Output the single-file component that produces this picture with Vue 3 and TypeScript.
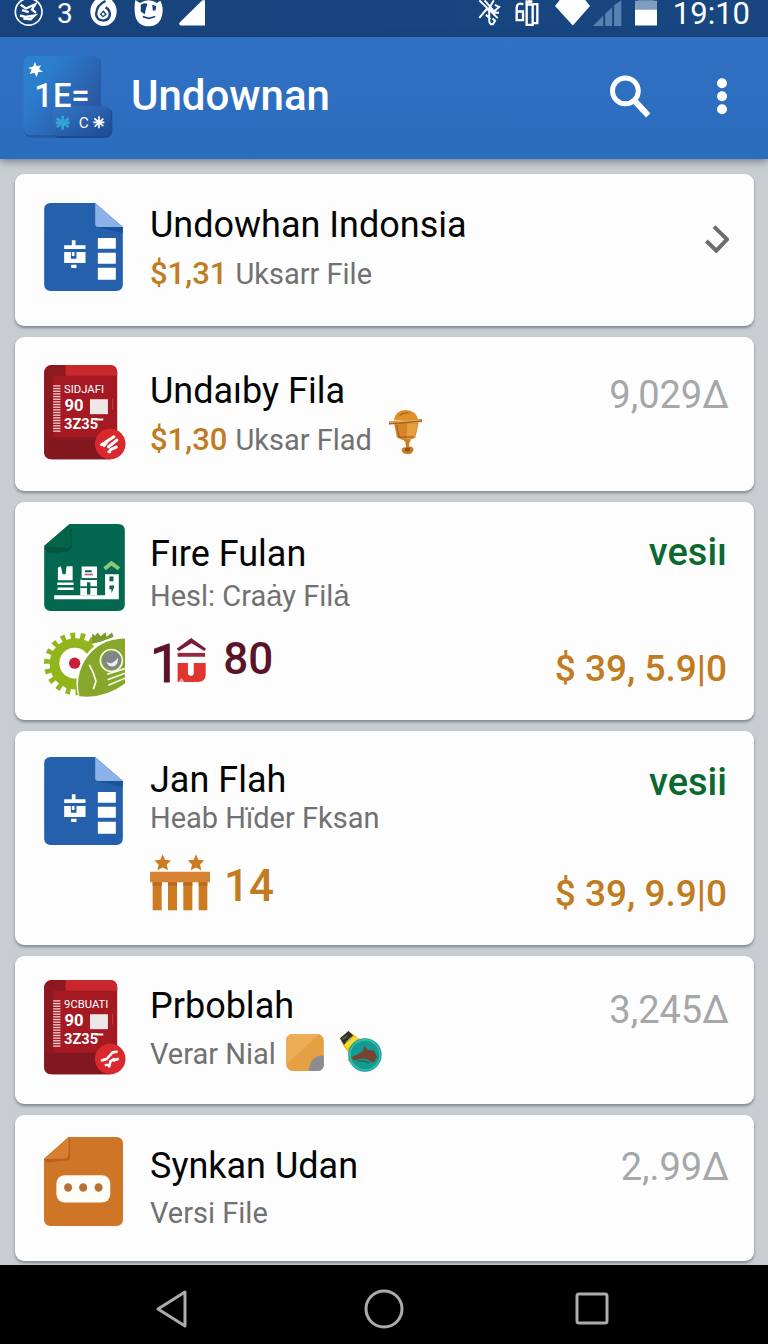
<script setup lang="ts">
interface Item {
  id: string
  icon: 'blue' | 'red' | 'green' | 'orange'
  title: string
  price?: string
  sub: string
  emblem?: 'lamp' | 'note'
  value?: string
  unit?: string
  status?: string
  total?: string
}

const items: Item[] = [
  { id: 'one', icon: 'blue', title: 'Undowhan Indonsia', price: '$1,31', sub: 'Uksarr File' },
  { id: 'two', icon: 'red', title: 'Undaıby Fila', price: '$1,30', sub: 'Uksar Flad', emblem: 'lamp', value: '9,029', unit: 'Δ' },
  { id: 'three', icon: 'green', title: 'Fıre Fulan', sub: 'Hesl: Craȧy Filȧ', status: 'vesiı', total: '$ 39, 5.9|0' },
  { id: 'four', icon: 'blue', title: 'Jan Flah', sub: 'Heab Hïder Fksan', status: 'vesii', total: '$ 39, 9.9|0' },
  { id: 'five', icon: 'red', title: 'Prboblah', sub: 'Verar Nial', emblem: 'note', value: '3,245', unit: 'Δ' },
  { id: 'six', icon: 'orange', title: 'Synkan Udan', sub: 'Versi File', value: '2,.99', unit: 'Δ' },
]

const bars = Array.from({ length: 18 }, (_, i) => 61 + i * 8)
</script>

<template>
  <div class="screen">
    <div class="status">
      <div class="status-left">
        <svg class="s1" viewBox="0 0 90 80" aria-hidden="true">
          <g fill="none" stroke="#fff">
            <circle cx="44" cy="35" r="40" stroke-width="5" />
            <path d="M20 14 36 25 64 12 54 28 66 38M24 30 44 36M18 46 34 50 62 46 50 57 28 55" stroke-width="7" />
          </g>
        </svg>
        <span class="count">3</span>
        <svg class="s2" viewBox="0 0 80 80" aria-hidden="true">
          <ellipse cx="40" cy="34" rx="39" ry="43" fill="#fff" />
          <path d="M46 3Q20 14 18 42 20 60 39 61 58 60 59 42 58 28 46 22" fill="none" stroke="#18447d" stroke-width="7" />
          <path d="M40 30 50 43 38 52 29 42z" fill="#18447d" />
          <circle cx="39" cy="42" r="4" fill="#fff" />
        </svg>
        <svg class="s3" viewBox="0 0 86 80" aria-hidden="true">
          <path d="M4 0 18 9Q43-7 68 9L78 2Q88 19 84 40 79 77 44 78 8 77 3 42 0 20 4 0z" fill="#fff" />
          <path d="M20 14Q30 6 40 12L36 24 32 42 20 34zM54 14 66 18 64 30 56 32zM26 47 44 52 64 47 62 52 44 57 26 52z" fill="#18447d" />
        </svg>
        <svg class="s4" viewBox="0 0 78 80" aria-hidden="true">
          <path d="M78 0V76H5Q-3 72 3 66L70 0z" fill="#fff" />
        </svg>
      </div>
      <div class="status-right">
        <svg class="s5" viewBox="0 0 70 80" aria-hidden="true">
          <path d="M4 0 60 54M20 0 46 30 25 28 4 53M48 0 34 24 34 60Q35 76 46 72L52 62 44 55M51 14 64 20 46 36 64 38M24 44 38 57" fill="none" stroke="#fff" stroke-width="6" />
        </svg>
        <svg class="s6" viewBox="0 0 72 80" aria-hidden="true">
          <path d="M25 12Q6 6 5 23V60H24V34H7M35 0V13H53V74H35V13M55 12H67V69H56" fill="none" stroke="#fff" stroke-width="7" />
          <path d="M39 0H52V9H39z" fill="#fff" />
        </svg>
        <svg class="s7" viewBox="0 0 104 80" aria-hidden="true">
          <path d="M14 0H90L104 18 53 76 0 18z" fill="#fff" />
        </svg>
        <svg class="s8" viewBox="0 0 88 80" aria-hidden="true">
          <path d="M0 78 31 47V78zM37 41 58 21V78H37zM64 15 86 0V78H64z" fill="#5583b1" />
        </svg>
        <svg class="s9" viewBox="0 0 66 80" aria-hidden="true">
          <path d="M0 2H10V0H56V2H66V28H0z" fill="#7f9dbf" />
          <path d="M0 28H66V76H0z" fill="#fff" />
        </svg>
        <time class="clock">19:10</time>
      </div>
    </div>

    <header class="appbar">
      <svg class="logo" viewBox="0 0 270 252" role="img" aria-label="Undownan">
        <defs>
          <linearGradient id="lg1" x1="0" y1="0" x2="1" y2="0.7">
            <stop offset="0" stop-color="#2b83cf" />
            <stop offset="0.35" stop-color="#2c7bcb" />
            <stop offset="1" stop-color="#2b529e" />
          </linearGradient>
          <linearGradient id="lg2" x1="0" y1="0" x2="1" y2="1">
            <stop offset="0" stop-color="#3476c8" />
            <stop offset="1" stop-color="#1f4a93" />
          </linearGradient>
        </defs>
        <rect x="4" y="6" width="230" height="242" rx="20" fill="#1d4f96" opacity="0.6" />
        <rect x="2" y="2" width="228" height="238" rx="20" fill="url(#lg1)" />
        <path d="M36 20 41 34 54 31 48 42 60 50 46 51 41 66 34 53 20 57 26 44 16 38 30 35z" fill="#fff" />
        <rect x="91" y="158" width="177" height="91" rx="20" fill="#173f82" opacity="0.7" />
        <rect x="88" y="154" width="175" height="90" rx="20" fill="url(#lg2)" />
        <text x="34" y="157" class="logo-text" fill="#fff">1E=</text>
        <path d="M119 182V224M101 190 137 216M137 190 101 216M98 203H140" stroke="#30a4d2" stroke-width="8" />
        <text x="167" y="219" class="badge-c" fill="#fff">C</text>
        <path d="M228 184V220M214 190 241 213M241 191 215 215M211 202H244" stroke="#fff" stroke-width="5" />
      </svg>
      <h1>Undownan</h1>
      <button class="icon-btn search" type="button" aria-label="Search">
        <svg viewBox="0 0 120 130" aria-hidden="true">
          <g fill="none" stroke="#fff">
            <circle cx="46" cy="48" r="39" stroke-width="15" />
            <path d="M72 76 115 122" stroke-width="18" />
          </g>
        </svg>
      </button>
      <button class="icon-btn more" type="button" aria-label="More options">
        <svg viewBox="0 0 30 110" aria-hidden="true">
          <g fill="#fff">
            <circle cx="15" cy="15" r="15" />
            <circle cx="15" cy="54" r="15" />
            <circle cx="15" cy="93" r="15" />
          </g>
        </svg>
      </button>
    </header>

    <main>
      <ul class="list">
        <li v-for="item in items" :key="item.id" class="card" :class="item.id">
          <div class="row">
            <div class="thumb">
              <svg v-if="item.icon === 'blue'" class="i-blue" viewBox="0 0 236 264" aria-hidden="true">
                <path d="M20 0H153L236 72V244Q236 264 216 264H20Q0 264 0 244V20Q0 0 20 0z" fill="#2560ad" />
                <path d="M153 72H236V90z" fill="#1b529a" />
                <path d="M153 0 236 72H162Q153 72 153 63z" fill="#8bb2e8" />
                <g fill="#fff">
                  <path d="M161 105H215V137H161zM161 149H215V182H161zM161 194H215V230H161z" />
                  <path d="M83 112H94V127H124V138H60V127H83zM60 147H80V167H97V147H124V180H60zM83 147H91V159H83zM81 185H97V195H81z" />
                </g>
              </svg>
              <svg v-else-if="item.icon === 'red'" class="i-red" viewBox="0 0 246 286" aria-hidden="true">
                <rect width="220" height="284" rx="22" fill="#a51922" />
                <path d="M64 0H198Q220 0 220 22V32H64z" fill="#c9272e" />
                <path d="M0 218H220V262Q220 284 198 284H22Q0 284 0 262z" fill="#831820" />
                <path d="M2 16Q8 1 24 1H64V32H28V218H0V22z" fill="#8c1820" />
                <rect v-for="y in bars" :key="y" x="27" :y="y" width="22" height="4" fill="#f2cfd0" />
                <g fill="#fff">
                  <text x="60" y="83" class="r1">{{ item.id === 'two' ? 'SIDJAFI' : '9CBUATI' }}</text>
                  <text x="61" y="138" class="r2">90</text>
                  <text x="60" y="194" class="r3">3Z35</text>
                </g>
                <path d="M152 164H178" stroke="#fff" stroke-width="6" />
                <rect x="138" y="103" width="54" height="45" fill="#eee7e7" />
                <path d="M206 101V134" stroke="#cf3940" stroke-width="3" />
                <circle cx="199" cy="238" r="46" fill="#d9292f" />
                <path v-if="item.id === 'two'" d="M173 240 210 216M181 243 190 230M194 246 219 226M200 255 217 247M195 261H198" fill="none" stroke="#fff" stroke-width="9" stroke-linecap="round" />
                <path v-else d="M174 242 188 238 206 218 218 216M196 260 200 244 210 238M210 242 222 238M186 256H190" fill="none" stroke="#fff" stroke-width="8" stroke-linecap="round" />
              </svg>
              <svg v-else-if="item.icon === 'green'" class="i-green" viewBox="0 0 241 260" aria-hidden="true">
                <path d="M76 0H221Q241 0 241 20V240Q241 260 221 260H20Q0 260 0 240V66z" fill="#046850" />
                <path d="M0 74 82 12V66Q82 80 68 82L14 88z" fill="#04553f" />
                <path d="M76 0 80 58Q80 72 66 72L0 66z" fill="#05634a" />
                <g fill="#fff">
                  <path d="M30 213H182V150H223V225H30zM41 131 50 126 55 150H64L67 126H85V168H41zM39 175H88V182H39zM41 190H88V197H39z" />
                  <path d="M112 127H158V162H112zM108 166H158V213H108z" />
                </g>
                <path d="M122 138H142V144H122zM112 162H158V167H112zM128 174H138V186H128zM108 186H158V191H108zM128 191H138V211H128zM195 157H207V171H195zM195 184H209V190L201 207V195H195z" fill="#07664c" />
                <path d="M121 151H146" stroke="#b36a89" stroke-width="5" />
                <path d="M177 129 201 110 227 129 220 138 201 125 184 138z" fill="#8ac779" />
              </svg>
              <svg v-else class="i-orange" viewBox="0 0 236 266" aria-hidden="true">
                <path d="M74 0H216Q236 0 236 20V246Q236 266 216 266H20Q0 266 0 246V66z" fill="#cf7528" />
                <path d="M74 0 78 10V60Q78 70 68 70L6 76 0 66z" fill="#b9611c" />
                <path d="M74 0 73 52Q72 64 60 65L0 66z" fill="#d97d30" />
                <rect x="37" y="114" width="161" height="82" rx="25" fill="#fffdf8" />
                <g fill="#b77138">
                  <ellipse cx="72" cy="151" rx="12" ry="13" />
                  <ellipse cx="117" cy="151" rx="12" ry="13" />
                  <ellipse cx="163" cy="151" rx="12" ry="13" />
                </g>
              </svg>
            </div>
            <div class="text">
              <h2>{{ item.title }}</h2>
              <p class="sub">
                <b v-if="item.price" class="price">{{ item.price }}</b>
                <span>{{ item.sub }}</span>
                <svg v-if="item.emblem === 'lamp'" class="e-lamp" viewBox="0 0 100 138" aria-hidden="true">
                  <path d="M15 34Q18 3 51 2 83 4 88 32z" fill="#df902d" />
                  <path d="M15 40H90L80 86Q53 103 24 86z" fill="#d5862b" />
                  <path d="M55 43H87L78 84 54 91z" fill="#e6a03f" />
                  <path d="M2 42 98 34" stroke="#a6611c" stroke-width="9" stroke-linecap="round" />
                  <path d="M3 40 97 32" stroke="#efae50" stroke-width="4" stroke-linecap="round" />
                  <path d="M23 48 31 85 75 84M31 20Q43 8 60 12M46 96H65M56 96V113" fill="none" stroke="#ab641c" stroke-width="4" />
                  <path d="M49 96H63L60 113Q76 112 74 125 70 137 55 136 39 135 38 123 39 114 52 115z" fill="#cc7a22" />
                  <ellipse cx="56" cy="122" rx="8" ry="6" fill="#8d4f13" />
                </svg>
                <template v-else-if="item.emblem === 'note'">
                  <svg class="e-note" viewBox="0 0 114 112" aria-hidden="true">
                    <rect width="114" height="112" rx="20" fill="#e5a044" />
                    <path d="M20 0H100L0 93V20Q0 0 20 0z" fill="#ebad56" />
                    <path d="M114 65Q72 63 68 112H94Q114 112 114 92z" fill="#8d8d91" />
                  </svg>
                  <svg class="e-orb" viewBox="0 0 128 128" aria-hidden="true">
                    <path d="M0 22 26 0 74 34 31 96 22 88 33 76 10 45z" fill="#e9bd19" />
                    <path d="M0 22 26 0 40 14 12 42z" fill="#30322c" />
                    <path d="M8 26 22 14M18 34 34 18" stroke="#8a8c80" stroke-width="3" />
                    <path d="M15 40 45 17 56 22 21 54z" fill="#f2dc37" />
                    <circle cx="76" cy="73" r="51" fill="#149b91" />
                    <circle cx="76" cy="73" r="46" fill="none" stroke="#38bbad" stroke-width="5" />
                    <path d="M34 80 55 71 70 61 73 45 84 57 104 60 113 79 106 92 96 96 84 85 65 84 43 90z" fill="#784331" />
                    <path d="M52 92Q76 88 90 98" fill="none" stroke="#29695e" stroke-width="5" />
                  </svg>
                </template>
              </p>
            </div>
            <button v-if="item.id === 'one'" class="open" type="button" aria-label="Open Undowhan Indonsia">
              <svg viewBox="0 0 72 84" aria-hidden="true">
                <path d="M27 5 66 43 34 77 4 48" fill="none" stroke="#6d6d6d" stroke-width="12" />
              </svg>
            </button>
            <span v-else-if="item.status" class="state">{{ item.status }}</span>
            <span v-else class="value">{{ item.value }}<i>{{ item.unit }}</i></span>
          </div>

          <div v-if="item.total" class="row extra">
            <div class="thumb">
              <svg v-if="item.id === 'three'" class="i-gear" viewBox="0 0 243 200" aria-hidden="true">
                <circle cx="94" cy="98" r="84" fill="none" stroke="#91b51b" stroke-width="20" stroke-dasharray="14 15.3" />
                <circle cx="94" cy="98" r="60" fill="none" stroke="#91b51b" stroke-width="34" />
                <circle cx="92" cy="96" r="46" fill="#fff" />
                <circle cx="92" cy="96" r="17" fill="#ca1d39" />
                <path d="M145 7 153 14 161 4 170 15 185 3 188 17 204 4 209 17 190 27 143 38z" fill="#789d28" />
                <path d="M243 14Q154 19 116 87 86 138 104 199 182 205 243 160z" fill="#fff" />
                <path d="M243 22Q162 24 123 87 93 136 106 195 180 204 243 157z" fill="#87a72c" />
                <circle cx="202" cy="88" r="33" fill="none" stroke="#f8fbe9" stroke-width="5" />
                <circle cx="204" cy="88" r="28" fill="#80868a" />
                <path d="M188 92Q203 105 222 80 222 108 203 106 190 104 188 92z" fill="#edf1ef" />
                <path d="M136 101 147 123 156 150 148 174M190 129 243 112M191 146 243 126M193 162 243 141" fill="none" stroke="#f8fbe9" stroke-width="5" />
              </svg>
            </div>
            <div class="tally">
              <template v-if="item.id === 'three'">
                <span class="lead">1</span>
                <svg class="i-house" viewBox="0 0 96 140" aria-hidden="true">
                  <path d="M2 35 47 2 93 35 88 42 48 18 9 42z" fill="#781d37" />
                  <path d="M5 48H90V60H5z" fill="#98293c" />
                  <path d="M5 79H37V114Q48 125 55 113V79H92V116Q91 138 68 138H5z" fill="#e13531" />
                  <path d="M8 138 17 126 26 138z" fill="#f3aaa5" />
                </svg>
                <span class="num wine">80</span>
              </template>
              <template v-else>
                <svg class="i-pillars" viewBox="0 0 180 170" aria-hidden="true">
                  <g fill="#cc7b20">
                    <path d="M38 0 45 17 63 19 50 31 54 48 38 40 22 48 26 31 13 19 31 17zM138 0 145 17 163 19 150 31 154 48 138 40 122 48 126 31 113 19 131 17z" />
                    <path d="M8 80H35V168H8zM54 80H81V168H54zM100 80H127V168H100zM146 80H172V168H146z" />
                  </g>
                  <rect y="53" width="180" height="31" rx="3" fill="#d78333" />
                  <path d="M8 84H35V95H8zM54 84H81V95H54zM100 84H127V95H100zM146 84H172V95H146z" fill="#b86a1c" />
                </svg>
                <span class="num gold">14</span>
              </template>
            </div>
            <span class="total">{{ item.total }}</span>
          </div>
        </li>
      </ul>
    </main>

    <nav class="navbar" aria-label="System navigation">
      <button type="button" aria-label="Back">
        <svg viewBox="0 0 40 40" aria-hidden="true"><path d="M31 3V37L4 20z" fill="none" stroke="#acacac" stroke-width="3" stroke-linejoin="round" /></svg>
      </button>
      <button type="button" aria-label="Home">
        <svg viewBox="0 0 40 40" aria-hidden="true"><circle cx="20" cy="20" r="18" fill="none" stroke="#acacac" stroke-width="3" /></svg>
      </button>
      <button type="button" aria-label="Recent apps">
        <svg viewBox="0 0 40 40" aria-hidden="true"><rect x="3" y="5" width="30" height="29" rx="2" fill="none" stroke="#acacac" stroke-width="3" /></svg>
      </button>
    </nav>
  </div>
</template>

<style>
body {
  margin: 0;
  background: #c8cdd2;
}
</style>

<style scoped>
.screen {
  display: flex;
  flex-direction: column;
  min-height: 100vh;
  font-family: Roboto, "Liberation Sans", sans-serif;
  background: #c8cdd2;
  color: #050505;
}
svg {
  display: block;
  flex: none;
}
button {
  border: 0;
  padding: 0;
  background: none;
  cursor: pointer;
}
.status {
  display: flex;
  justify-content: space-between;
  height: 37px;
  padding: 0 18px 0 14px;
  background: linear-gradient(90deg, #18447d, #174681);
  color: #fff;
}
.status-left,
.status-right {
  display: flex;
  align-items: flex-start;
}
.status svg {
  height: 27px;
}
.s1 { width: 30px; }
.count {
  margin: 0 17px 0 13px;
  font-size: 28px;
  line-height: 28px;
}
.s2 { width: 27px; }
.s3 { width: 29px; margin-left: 17px; }
.s4 { width: 26px; margin-left: 16px; }
.s5 { width: 23px; }
.s6 { width: 24px; margin-left: 14px; }
.s7 { width: 35px; margin-left: 16px; }
.s8 { width: 29px; margin-left: 3px; }
.s9 { width: 22px; margin-left: 13px; }
.clock {
  margin-left: 16px;
  font-size: 31px;
  line-height: 28px;
}
.appbar {
  display: flex;
  align-items: center;
  box-sizing: border-box;
  height: 122px;
  padding: 0 41px 3px 23px;
  background: linear-gradient(#3071c4, #2b6cbd);
  box-shadow: 0 2px 8px rgba(50, 65, 85, 0.6);
  color: #fff;
  z-index: 1;
}
.logo {
  width: 90px;
  height: 84px;
}
.logo-text {
  font-size: 98px;
  font-weight: 500;
}
.badge-c {
  font-size: 46px;
}
h1 {
  flex: 1;
  margin: 0 0 1px 18px;
  font-size: 42px;
  font-weight: 500;
  line-height: 48px;
}
.search svg {
  width: 40px;
  height: 43px;
}
.more {
  margin-left: 67px;
}
.more svg {
  width: 10px;
  height: 37px;
}
main {
  flex: 1;
}
.list {
  display: flex;
  flex-direction: column;
  gap: 11px;
  margin: 0;
  padding: 15px 14px 4px 15px;
  list-style: none;
}
.card {
  padding: 29px 27px 32px 29px;
  border-radius: 9px;
  background: #fdfdfd;
  box-shadow: 0 2px 3px rgba(70, 78, 88, 0.55);
}
.two { padding-top: 28px; padding-bottom: 31px; }
.three { padding-top: 22px; padding-bottom: 22px; }
.four { padding-top: 26px; padding-bottom: 34px; }
.five { padding-top: 24px; padding-bottom: 29px; }
.six { padding-top: 22px; padding-bottom: 28px; }
.row {
  display: flex;
  align-items: flex-start;
}
.thumb {
  flex: none;
  width: 82px;
  margin-right: 24px;
}
.i-blue { width: 79px; height: 88px; }
.i-red { width: 82px; height: 95px; }
.i-green { width: 81px; height: 87px; }
.i-orange { width: 79px; height: 89px; }
.i-gear { width: 81px; height: 67px; }
.r1 { font-size: 34px; }
.r2 { font-size: 50px; font-weight: 700; }
.r3 { font-size: 44px; font-weight: 700; }
.text {
  flex: 1;
  min-width: 0;
}
h2 {
  margin: 0;
  font-size: 36px;
  font-weight: 400;
  line-height: 44px;
}
.sub {
  display: flex;
  align-items: center;
  height: 40px;
  margin: 7px 0 0;
  font-size: 29px;
  line-height: 40px;
  color: #717171;
  white-space: nowrap;
}
.price {
  margin-right: 8px;
  font-size: 31px;
  font-weight: 500;
  color: #c17b20;
}
.two .text,
.five .text { margin-top: 4px; }
.three .text { margin-top: 10px; }
.four .text { margin-top: 3px; }
.six .text { margin-top: 7px; }
.five .sub { margin-top: 6px; }
.six .sub { margin-top: 5px; }
.three h2,
.four h2 { line-height: 40px; }
.three .sub,
.four .sub { height: 36px; line-height: 36px; margin-top: 0; }
.three .sub { margin-top: 4px; }
.e-lamp { width: 33px; height: 46px; margin: 0 0 16px 17px; }
.e-note { width: 38px; height: 37px; margin: 0 0 4px 10px; }
.e-orb { width: 42px; height: 42px; margin: 0 0 4px 16px; }
.open {
  margin: 22px -2px 0 0;
}
.open svg {
  width: 24px;
  height: 28px;
}
.value {
  margin: 4px -2px 0 0;
  font-size: 38px;
  line-height: 52px;
  color: #a5a7a9;
}
.value i {
  font-style: normal;
}
.state {
  margin-top: 2px;
  font-size: 38px;
  font-weight: 500;
  line-height: 52px;
  color: #09692f;
}
.four .state { margin-top: -1px; }
.extra {
  align-items: center;
}
.three .extra { margin-top: 17px; }
.four .extra { margin-top: 9px; }
.tally {
  display: flex;
  flex: 1;
  align-items: center;
  line-height: 50px;
}
.lead {
  margin-bottom: 2px;
  font-size: 54px;
  color: #5a1329;
  -webkit-text-stroke: 1px #5a1329;
}
.i-house { width: 31px; height: 46px; margin: 0 0 10px -4px; }
.i-pillars { width: 60px; height: 57px; }
.num {
  font-size: 44px;
  font-weight: 500;
  line-height: 44px;
}
.wine { margin: 0 0 12px 16px; color: #5a1329; }
.gold { margin: 7px 0 0 14px; color: #c17b20; }
.total {
  align-self: flex-end;
  font-size: 37px;
  font-weight: 500;
  line-height: 34px;
  color: #c17b20;
  white-space: nowrap;
}
.three .total { padding-bottom: 12px; }
.navbar {
  display: flex;
  justify-content: space-between;
  align-items: center;
  height: 79px;
  padding: 8px 20% 0;
  box-sizing: border-box;
  background: #000;
}
.navbar svg {
  width: 40px;
  height: 40px;
}
</style>
